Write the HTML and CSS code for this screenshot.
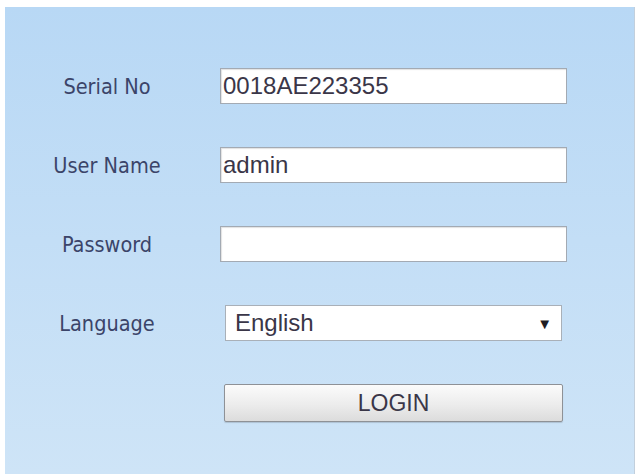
FILE: index.html
```html
<!DOCTYPE html>
<html>
<head>
<meta charset="utf-8">
<link rel="stylesheet" href="styles.css">
</head>
<body>
<div class="panel">
  <form class="login-form">
    <label class="lbl">Serial No</label>
    <div class="field"><div class="input">0018AE223355</div></div>
    <label class="lbl">User Name</label>
    <div class="field"><div class="input">admin</div></div>
    <label class="lbl">Password</label>
    <div class="field"><div class="input"></div></div>
    <label class="lbl">Language</label>
    <div class="field"><div class="select"><span>English</span><span class="arrow">&#9660;</span></div></div>
    <div></div>
    <div class="field"><div class="btn">LOGIN</div></div>
  </form>
</div>
</body>
</html>
```
FILE: styles.css
```css
html, body {
  margin: 0;
  padding: 0;
  background: #ffffff;
}
body {
  width: 640px;
  height: 476px;
  padding: 7px 5px 2px 5px;
  box-sizing: border-box;
}
.panel {
  height: 467px;
  background: linear-gradient(to bottom, #b8d8f5 0%, #c3def6 50%, #cee4f7 100%);
  border-right: 1px solid #c2cfdc;
  box-sizing: border-box;
  padding-top: 61px;
}
.login-form {
  display: grid;
  grid-template-columns: 204px 1fr;
  grid-auto-rows: 36px;
  row-gap: 43px;
  column-gap: 10px;
  align-items: center;
}
.lbl {
  text-align: center;
  font-family: "DejaVu Sans Condensed", "DejaVu Sans", Verdana, sans-serif;
  font-stretch: condensed;
  font-size: 21.5px;
  color: #3b4469;
}
.field {
  height: 36px;
  display: flex;
}
.input {
  width: 347px;
  height: 36px;
  margin-left: 1px;
  box-sizing: border-box;
  background: #ffffff;
  border: 1px solid #a3aab3;
  box-shadow: inset 1px 1px 1px rgba(0,0,0,0.12);
  font-family: "Liberation Sans", Arial, sans-serif;
  font-size: 24px;
  line-height: 34px;
  color: #3a3648;
  padding-left: 2px;
}
.select {
  width: 337px;
  height: 36px;
  margin-left: 6px;
  box-sizing: border-box;
  background: #ffffff;
  border: 1px solid #a9b0b8;
  display: flex;
  align-items: center;
  justify-content: space-between;
  font-family: "Liberation Sans", Arial, sans-serif;
  font-size: 24px;
  color: #3a3648;
  padding: 0 9px 0 9px;
}
.arrow {
  font-size: 15px;
  color: #1e1e24;
}
.btn {
  width: 339px;
  height: 38px;
  margin-left: 5px;
  box-sizing: border-box;
  border: 1px solid #8e9196;
  border-radius: 2px;
  background: linear-gradient(to bottom, #fbfbfb 0%, #ececec 55%, #dcdcdc 100%);
  box-shadow: 0 1px 1px rgba(0,0,0,0.15);
  text-align: center;
  font-family: "Liberation Sans", Arial, sans-serif;
  font-size: 23px;
  line-height: 36px;
  color: #3a3648;
}
```
